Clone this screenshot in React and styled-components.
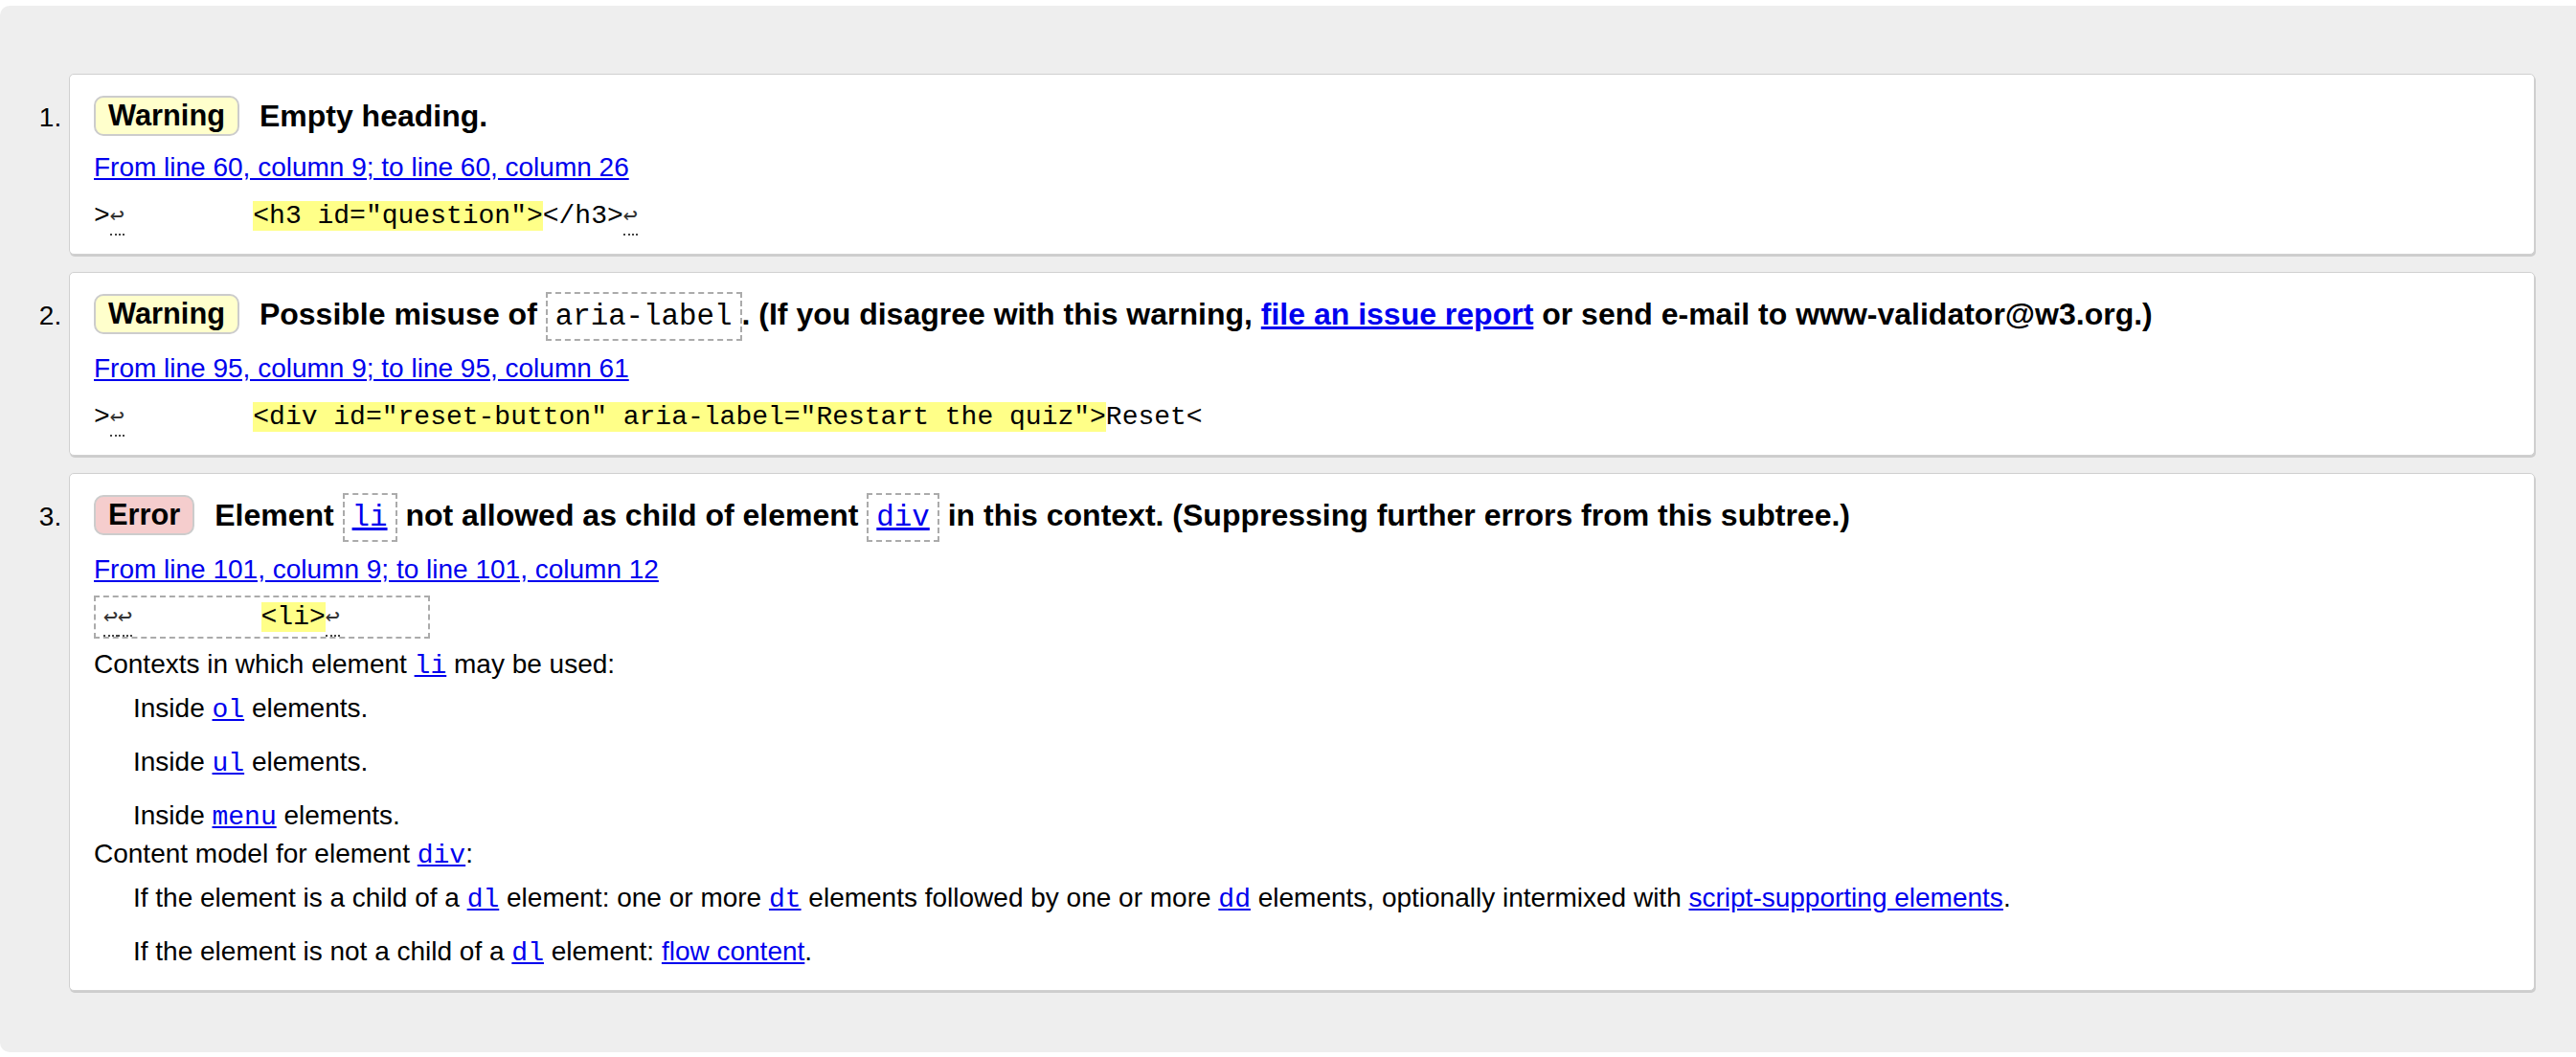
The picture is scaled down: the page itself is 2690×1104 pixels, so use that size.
import React from "react";
import styled, { createGlobalStyle } from "styled-components";

const GlobalStyle = createGlobalStyle`
  html, body {
    margin: 0;
    padding: 0;
    background: #fff;
  }
  body {
    font-family: "Liberation Sans", Arial, sans-serif;
    font-size: 28px;
    color: #000;
  }
`;

const Panel = styled.div`
  margin: 6px 0 4px 0;
  background: #eeeeee;
  border-radius: 10px 0 0 10px;
  padding: 71px 43px 64px 0;
`;

const MessageList = styled.ol`
  margin: 0;
  padding-left: 72px;
  list-style: decimal;
`;

const Card = styled.li`
  background: #fff;
  border: 1px solid #d0d0d0;
  border-radius: 5px;
  box-shadow: 1px 2px 0 #cdcdcd;
  padding: 22px 25px 17px;
  margin-bottom: 18px;
  line-height: 34px;

  &:last-child {
    margin-bottom: 0;
  }
`;

const Heading = styled.p`
  margin: 0 0 16px;
  font-size: 32px;
  font-weight: bold;
  line-height: 42px;
`;

const Badge = styled.span`
  display: inline-block;
  vertical-align: top;
  padding: 0 13px;
  font-size: 30.8px;
  line-height: 38px;
  border: 2px solid #cccccc;
  border-radius: 10px;
  margin-right: 12px;
  background: ${(p) => (p.$kind === "error" ? "#f5cdcd" : "#ffffcc")};
`;

const Link = styled.a`
  color: #0000ee;
  text-decoration: underline;
`;

const HeadingCode = styled.code`
  font-family: "Liberation Mono", "DejaVu Sans Mono", monospace;
  font-size: 30.8px;
  font-weight: normal;
  padding: 6px 8px;
  border: 2px dashed #ababab;
`;

const CodeLink = styled.a`
  font-family: "Liberation Mono", "DejaVu Sans Mono", monospace;
  font-size: ${(p) => p.$size || 28}px;
  color: #0000ee;
  text-decoration: underline;
`;

const Location = styled.p`
  margin: 0 0 ${(p) => (p.$tight ? 10 : 11)}px;
`;

const Extract = styled.pre`
  display: ${(p) => (p.$boxed ? "inline-block" : "block")};
  margin: ${(p) => (p.$boxed ? "0 0 10px" : "0")};
  padding: ${(p) => (p.$boxed ? "3px 8px" : "5px 0")};
  border: ${(p) => (p.$boxed ? "2px dashed #ababab" : "none")};
  font-family: "Liberation Mono", "DejaVu Sans Mono", monospace;
  font-size: 28px;
  line-height: 34px;
  white-space: pre;
`;

const Highlight = styled.mark`
  background: #ffff88;
  color: inherit;
`;

const LineFeed = styled.span`
  font-family: "DejaVu Sans Mono", monospace;
  font-size: 25px;
  color: #333;
  border-bottom: 2px dotted #444;
  padding-bottom: 5px;
`;

const DetailTitle = styled.p`
  margin: 0;
`;

const DetailItem = styled.p`
  margin: 0;
  padding: 10px 0 ${(p) => (p.$last ? 4 : 10)}px 41px;
`;

const Details = styled.div`
  display: block;
  margin-bottom: -6px;
`;

const Lf = () => <LineFeed title="U+000A LINE FEED">↩</LineFeed>;

export default function App() {
  return (
    <>
      <GlobalStyle />
      <Panel>
        <MessageList>
          <Card>
            <Heading>
              <Badge>Warning</Badge> Empty heading.
            </Heading>
            <Location>
              <Link href="#">From line 60, column 9; to line 60, column 26</Link>
            </Location>
            <Extract>
              {">"}
              <Lf />
              {"        "}
              <Highlight>{'<h3 id="question">'}</Highlight>
              {"</h3>"}
              <Lf />
            </Extract>
          </Card>

          <Card>
            <Heading>
              <Badge>Warning</Badge> Possible misuse of{" "}
              <HeadingCode>aria-label</HeadingCode>. (If you disagree with this
              warning, <Link href="#">file an issue report</Link> or send e-mail
              to www-validator@w3.org.)
            </Heading>
            <Location>
              <Link href="#">From line 95, column 9; to line 95, column 61</Link>
            </Location>
            <Extract>
              {">"}
              <Lf />
              {"        "}
              <Highlight>
                {'<div id="reset-button" aria-label="Restart the quiz">'}
              </Highlight>
              {"Reset<"}
            </Extract>
          </Card>

          <Card>
            <Heading>
              <Badge $kind="error">Error</Badge> Element{" "}
              <HeadingCode>
                <CodeLink href="#" $size={30.8}>li</CodeLink>
              </HeadingCode>{" "}
              not allowed as child of element{" "}
              <HeadingCode>
                <CodeLink href="#" $size={30.8}>div</CodeLink>
              </HeadingCode>{" "}
              in this context. (Suppressing further errors from this subtree.)
            </Heading>
            <Location $tight>
              <Link href="#">From line 101, column 9; to line 101, column 12</Link>
            </Location>
            <Extract $boxed>
              <Lf />
              <Lf />
              {"        "}
              <Highlight>{"<li>"}</Highlight>
              <Lf />
              {"     "}
            </Extract>
            <Details>
              <DetailTitle>
                Contexts in which element <CodeLink href="#">li</CodeLink> may be
                used:
              </DetailTitle>
              <DetailItem>
                Inside <CodeLink href="#">ol</CodeLink> elements.
              </DetailItem>
              <DetailItem>
                Inside <CodeLink href="#">ul</CodeLink> elements.
              </DetailItem>
              <DetailItem $last>
                Inside <CodeLink href="#">menu</CodeLink> elements.
              </DetailItem>
              <DetailTitle>
                Content model for element <CodeLink href="#">div</CodeLink>:
              </DetailTitle>
              <DetailItem>
                If the element is a child of a <CodeLink href="#">dl</CodeLink>{" "}
                element: one or more <CodeLink href="#">dt</CodeLink> elements
                followed by one or more <CodeLink href="#">dd</CodeLink> elements,
                optionally intermixed with{" "}
                <Link href="#">script-supporting elements</Link>.
              </DetailItem>
              <DetailItem>
                If the element is not a child of a{" "}
                <CodeLink href="#">dl</CodeLink> element:{" "}
                <Link href="#">flow content</Link>.
              </DetailItem>
            </Details>
          </Card>
        </MessageList>
      </Panel>
    </>
  );
}
